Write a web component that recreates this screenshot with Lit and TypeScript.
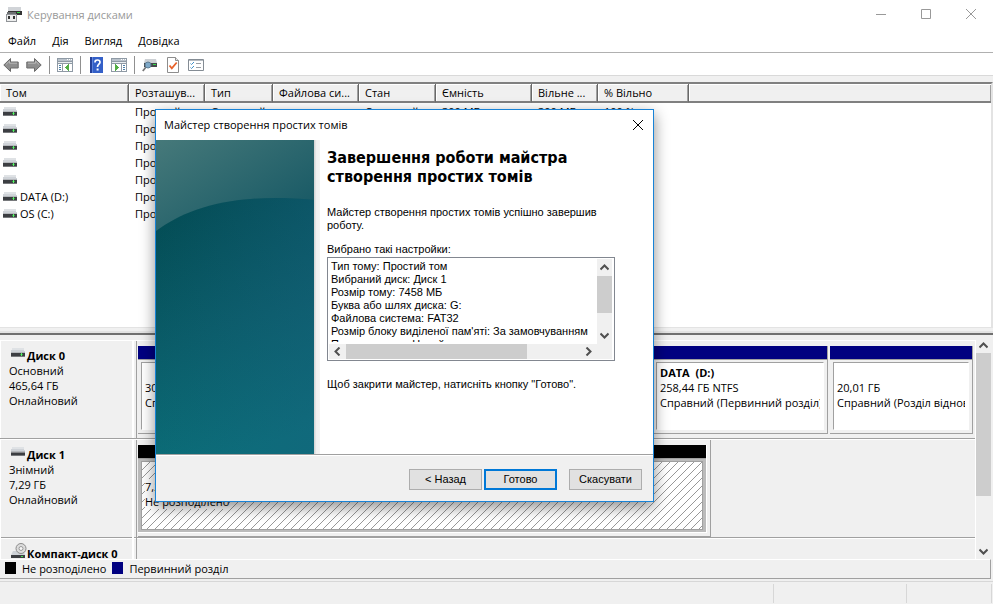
import { LitElement, html, css, svg } from "lit";
import { customElement } from "lit/decorators.js";

const driveIcon = (led = true) => html`<svg class="drive" width="14" height="9" viewBox="0 0 14 9" shape-rendering="crispEdges" aria-hidden="true">
  <path d="M1 0h12l1 5H0z" fill="#cfd3d8"/><path d="M1 0h12v2H1z" fill="#dfe2e5"/>
  <path d="M0 5h14v4H0z" fill="#3c3e42"/><path d="M0 4h14v1H0z" fill="#b4b7bb"/><path d="M0 8h14v1H0z" fill="#77797c"/>
  ${led ? svg`<path d="M9 6h3v1H9z" fill="#2fa53c"/><path d="M10 5h1v3h-1z" fill="#5df06a"/>` : svg`<path d="M0 5h14v1H0z" fill="#88898c"/>`}
</svg>`;

const cdIcon = html`<svg class="drive cd" width="16" height="16" viewBox="0 0 16 16" aria-hidden="true">
  <path d="M2 8h11l1 4H0z" fill="#cfd3d8"/><path d="M0 12h14v3H0z" fill="#3c3e42"/>
  <circle cx="10" cy="5.500" r="5" fill="#dcdcdc" stroke="#8c8c8c"/><circle cx="10" cy="5.500" r="2" fill="#f7f7f7" stroke="#9a9a9a"/>
  <path d="M10 13h2v1h-2z" fill="#41e04f"/>
</svg>`;

const chevron = (d: string) => html`<svg width="9" height="9" viewBox="0 0 9 9" aria-hidden="true"><path d=${d} fill="none" stroke="#505050" stroke-width="2"/></svg>`;
const UP = "M.5 6.500l4-4 4 4";
const DOWN = "M.5 2.500l4 4 4-4";
const LEFT = "M6.500 .5l-4 4 4 4";
const RIGHT = "M2.500 .5l4 4-4 4";

const arrowIcon = (right: boolean) => html`<svg width="16" height="16" viewBox="0 0 16 16" aria-hidden="true">
  <g transform=${right ? "matrix(-1 0 0 1 16 0)" : ""}>
  <path d="M.8 8L7.500 1.500V5h7.700v6H7.500v3.500z" fill="#8f8f8f" stroke="#6a6a6a"/><path d="M3 7.500l3.500-3.400V6.200h7.500" fill="none" stroke="#b9b9b9"/></g></svg>`;

const panelIcon = (right: boolean) => html`<svg width="16" height="16" viewBox="0 0 16 16" shape-rendering="crispEdges" aria-hidden="true">
  <path d="M0 1h16v14H0z" fill="#8f9aa5"/><path d="M1 2h14v2H1z" fill="#b9c2cb"/><path d="M10 2h1v1h-1zM12 2h1v1h-1zM14 2h1v1h-1z" fill="#fff"/>
  <path d="M1 5h14v1H1z" fill="#e9edf0"/>
  ${right
    ? svg`<path d="M1 7h9v7H1zM11 7h4v7h-4z" fill="#fff"/><path d="M4 7h1v1h1v1h1v1h1v1H7v1H6v1H5v1H4z" fill="#53ae45"/><path d="M12 8h2v1h-2zM12 10h2v1h-2zM12 12h2v1h-2z" fill="#4a7ea8"/>`
    : svg`<path d="M1 7h4v7H1zM6 7h9v7H6z" fill="#fff"/><path d="M11 7h1v7h-1v-1h-1v-1H9v-1H8v-1h1V9h1V8h1z" fill="#53ae45"/><path d="M2 8h2v1H2zM2 10h2v1H2zM2 12h2v1H2z" fill="#4a7ea8"/>`}
</svg>`;

const helpIcon = html`<svg width="13" height="16" viewBox="0 0 13 16" aria-hidden="true">
  <path d="M0 0h13v16H0z" fill="#3460c8"/><path d="M0 0h2v16H0z" fill="#233f98"/><path d="M2 0h1v16H2z" fill="#5d84dc"/>
  <path d="M5 5.500C5 3.500 6 3 7.300 3S10 3.700 10 5.200C10 7.200 7.500 7.300 7.500 10" fill="none" stroke="#fff" stroke-width="1.700"/><path d="M6.600 11.500h2v2h-2z" fill="#fff"/></svg>`;

const searchIcon = html`<svg width="16" height="14" viewBox="0 0 16 14" aria-hidden="true">
  <path d="M3 1h11l1 4H2z" fill="#ccd0d4"/><path d="M2 5h13v4H2z" fill="#45484c"/><path d="M11 6h3v1h-3z" fill="#36d748"/>
  <path d="M4 9L.8 13" stroke="#777" stroke-width="1.800"/><circle cx="6" cy="7" r="3" fill="#7fa9c8" stroke="#5d7c94"/></svg>`;

const docIcon = html`<svg width="12" height="16" viewBox="0 0 12 16" aria-hidden="true">
  <path d="M.5.5h8l3 3v12H.5z" fill="#fff" stroke="#8d8d8d"/><path d="M8.500.5v3h3" fill="#e6e6e6" stroke="#8d8d8d"/>
  <path d="M2.500 8.500l2.300 2.800L9.700 5.500" fill="none" stroke="#e8622a" stroke-width="1.800"/></svg>`;

const checklistIcon = html`<svg width="16" height="12" viewBox="0 0 16 12" aria-hidden="true">
  <path d="M.5.500h15v11H.5z" fill="#fff" stroke="#848c94"/><path d="M1 1h14v1H1z" fill="#b5bbc1"/>
  <path d="M2.500 4.500l1 1 2.500-2.500M2.500 8.500l1 1L6 7" fill="none" stroke="#3f8fc8"/><path d="M8 4.500h5M8 8.500h5" stroke="#9aa0a6"/></svg>`;

const appIcon = html`<svg width="16" height="15" viewBox="0 0 16 15" shape-rendering="crispEdges" aria-hidden="true">
  <path d="M2 0h13v4H2z" fill="#d1d4d8"/><path d="M2 4h14v4H2z" fill="#333"/><path d="M11 5h3v1h-3z" fill="#39d54a"/>
  <path d="M1 5h9v3H1z" fill="#6d7073"/><path d="M0 7h11v8H0z" fill="#909397"/><path d="M1 8h9v6H1z" fill="#eceded"/><path d="M2 9h2v3H2zM7 9h2v3H7z" fill="#333"/></svg>`;

interface Volume { name: string; layout: string; type: string; fs: string; state: string; size: string; free: string; percent: string; }
const volume = (name: string): Volume => ({ name, layout: "Простий", type: "Основний", fs: "", state: "Справний", size: "300 МБ", free: "300 МБ", percent: "100 %" });
const VOLUMES = ["", "", "", "", "", "DATA (D:)", "OS (C:)"].map(volume);
const COLUMNS = ["Том", "Розташув...", "Тип", "Файлова си...", "Стан", "Ємність", "Вільне ...", "% Вільно", ""];

const SETTINGS = [
  "Тип тому: Простий том",
  "Вибраний диск: Диск 1",
  "Розмір тому: 7458 МБ",
  "Буква або шлях диска: G:",
  "Файлова система: FAT32",
  "Розмір блоку виділеної пам'яті: За замовчуванням",
  "Позначка тому: Новий том",
].join("\n");

@customElement("completion-wizard")
export class CompletionWizard extends LitElement {
  static styles = css`
    :host { display: block; box-sizing: border-box; border: 1px solid #1883d7; background: #fff; font: 11px/13px "Liberation Sans", Arial, sans-serif; color: #000; box-shadow: 0 5px 14px rgba(0, 0, 0, 0.45); }
    * { box-sizing: border-box; }
    header { height: 30px; display: flex; align-items: center; justify-content: space-between; padding: 0 9px 0 8px; font: 11px/16px "Open Sans", "Noto Sans", sans-serif; }
    .close { border: 0; background: none; padding: 0; display: flex; }
    .body { display: flex; height: 314px; }
    .art { flex: none; width: 158px; height: 314px; display: block; }
    .edge { flex: none; width: 6px; background: linear-gradient(90deg, #d0d0d0, #f0f0f0 40%, #f4f4f4); }
    .content { flex: 1; min-width: 0; padding: 8px 38px 0 7px; }
    h1 { margin: 0 0 20px; font: bold 16px/19px "DejaVu Sans Condensed", "DejaVu Sans", sans-serif; font-stretch: normal; }
    p { margin: 0; }
    .lead { margin-bottom: 11px; }
    label { display: block; margin-bottom: 1px; }
    .box { display: grid; grid-template: 85px 15px / 1fr 15px; border: 1px solid #828790; padding: 1px 2px 1px 1px; margin-bottom: 17px; height: 104px; }
    textarea { width: 100%; height: 83px; resize: none; border: 0; outline: 0; padding: 1px 2px; font: inherit; color: inherit; overflow: hidden; white-space: pre; background: #fff; }
    .bar { display: flex; background: #f0f0f0; align-items: center; }
    .bar.v { flex-direction: column; }
    .bar span { flex: none; width: 17px; height: 17px; display: grid; place-items: center; }
    .bar.v span { width: 15px; }
    .bar.h span { height: 15px; }
    .bar i { background: #cdcdcd; }
    .bar.v i { width: 15px; height: 37px; margin-bottom: auto; }
    .bar.h i { height: 15px; width: 181px; margin-right: auto; }
    .corner { background: #f0f0f0; }
    footer { height: 47px; border-top: 1px solid #a0a0a0; box-shadow: inset 0 1px #fff; background: #f0f0f0; display: flex; justify-content: flex-end; align-items: center; gap: 2px; padding: 2px 11px 0 0; }
    footer button { width: 73px; height: 21px; padding: 0; border: 1px solid #adadad; background: #e1e1e1; font: inherit; color: inherit; }
    footer .primary { border: 2px solid #0078d7; }
    footer .cancel { margin-left: 10px; }
  `;
  render() {
    return html`
      <header><span>Майстер створення простих томів</span>
        <button class="close" aria-label="Закрити"><svg width="12" height="12" viewBox="0 0 12 12"><path d="M1 1l10 10M11 1L1 11" stroke="#000" fill="none"/></svg></button></header>
      <div class="body">
        <svg class="art" viewBox="0 0 158 314" aria-hidden="true">
          <defs>
            <linearGradient id="top" x1="0" y1="0" x2="1" y2="1"><stop offset="0" stop-color="#46797a"/><stop offset="1" stop-color="#0f5361"/></linearGradient>
            <linearGradient id="low" x1="0.300" y1="0" x2="0.500" y2="1"><stop offset="0" stop-color="#034c54"/><stop offset="0.500" stop-color="#0a5c68"/><stop offset="1" stop-color="#0b6e79"/></linearGradient>
            <linearGradient id="side"><stop offset="0" stop-color="#1a6080" stop-opacity="0"/><stop offset="1" stop-color="#1a6080" stop-opacity=".35"/></linearGradient>
          </defs>
          <path d="M0 0h158v100H0z" fill="url(#top)"/>
          <path d="M0 91C30 69 75 52 158 60V314H0z" fill="url(#low)"/>
          <path d="M0 91C30 69 75 52 158 60V314H0z" fill="url(#side)"/>
        </svg>
        <div class="edge"></div>
        <div class="content">
          <h1>Завершення роботи майстра створення простих томів</h1>
          <p class="lead">Майстер створення простих томів успішно завершив роботу.</p>
          <label for="settings">Вибрано такі настройки:</label>
          <div class="box">
            <textarea id="settings" readonly .value=${SETTINGS}></textarea>
            <div class="bar v"><span>${chevron(UP)}</span><i></i><span>${chevron(DOWN)}</span></div>
            <div class="bar h"><span>${chevron(LEFT)}</span><i></i><span>${chevron(RIGHT)}</span></div>
            <div class="corner"></div>
          </div>
          <p>Щоб закрити майстер, натисніть кнопку "Готово".</p>
        </div>
      </div>
      <footer><button>&lt; Назад</button><button class="primary">Готово</button><button class="cancel">Скасувати</button></footer>`;
  }
}

@customElement("app-root")
export class AppRoot extends LitElement {
  static styles = css`
    :host { display: flex; flex-direction: column; position: relative; height: 100vh; min-height: 560px; overflow: hidden; background: #f0f0f0; color: #000; font: 11px/15px "Open Sans", "Noto Sans", sans-serif; }
    * { box-sizing: border-box; }
    button { font: inherit; color: inherit; border: 0; background: none; padding: 0; }
    .title { flex: none; height: 30px; background: #fff; display: flex; align-items: center; gap: 5px; padding: 0 0 2px 6px; color: #999; }
    .controls { margin-left: auto; display: flex; }
    .controls button { width: 45px; height: 28px; display: grid; place-items: center; }
    .menu { flex: none; height: 23px; background: #fff; border-bottom: 1px solid #b0b0b0; display: flex; gap: 16px; align-items: center; padding: 0 0 2px 8px; }
    .tools { flex: none; height: 23px; background: #fff; border-bottom: 1px solid #d9d9d9; display: flex; align-items: center; gap: 7px; padding: 2px 0 0 3px; }
    .tools button { width: 16px; display: flex; justify-content: center; }
    .tools hr { width: 1px; height: 18px; margin: 0; border: 0; background: #909090; }
    .list { flex: 1; min-height: 0; overflow: hidden; margin-top: 6px; background: #fff; border-top: 2px solid #808080; border-right: 2px solid #e3e3e3; }
    table { width: 100%; table-layout: fixed; border-collapse: separate; border-spacing: 0; }
    .c0 { width: 129px; } .c1 { width: 76px; } .c2 { width: 68px; } .c3 { width: 86px; } .c4 { width: 77px; } .c5 { width: 96px; } .c6 { width: 66px; } .c7 { width: 91px; }
    th { height: 19px; padding: 0 0 0 6px; text-align: left; font-weight: 400; line-height: 15px; white-space: nowrap; overflow: hidden; background: #f0f0f0; border-right: 1px solid #696969; border-bottom: 2px solid #808080; box-shadow: inset 1px 1px #fff, inset -1px 0 #a0a0a0; }
    th:last-child { border-right: 0; }
    td { height: 17px; padding: 0 0 0 6px; line-height: 17px; white-space: nowrap; overflow: hidden; }
    td:first-child { padding-left: 3px; }
    .vol { display: flex; align-items: center; gap: 3px; height: 17px; }
    .drive { flex: none; }
    .split { flex: none; height: 13px; border-top: 1px solid #e3e3e3; display: flex; flex-direction: column; }
    .split div { height: 7px; border-bottom: 2px solid #707070; box-shadow: inset 0 -2px #e3e3e3; }
    .pane { flex: none; height: 219px; display: grid; grid-template-columns: 1fr 17px; overflow: hidden; }
    .disks { overflow: hidden; border-right: 1px solid #fff; }
    .disk { display: grid; grid-template-columns: 134px 1fr; column-gap: 2px; height: 99px; border-bottom: 1px solid #a0a0a0; border-top: 1px solid #fff; }
    .info { border-left: 1px solid #fff; border-right: 2px solid #fff; padding: 7px 0 0 8px; }
    .info h2 { margin: 0; font-size: 11px; line-height: 15px; display: flex; gap: 2px; padding-left: 2px; white-space: nowrap; }
    .info .cd { margin-top: -3px; margin-right: -2px; }
    .lane { border-left: 1px solid #a0a0a0; padding: 5px 2px 4px 1px; }
    .parts { display: grid; grid-template-columns: 164fr 347fr 175fr 143fr; gap: 2px; height: 88px; }
    .part { min-width: 0; display: flex; flex-direction: column; border-bottom: 1px solid #a0a0a0; border-right: 1px solid #a0a0a0; }
    .strip { flex: none; height: 14px; background: #000080; border-bottom: 1px solid #a0a0a0; }
    .cell { flex: 1; margin: 2px 3px 3px; background: #fff; border: 1px solid #fff; border-left-color: #a0a0a0; border-top-color: #a0a0a0; padding: 2px 3px 0; overflow: hidden; white-space: pre; }
    .cell div { height: 15px; overflow: hidden; }
    .picked { display: grid; grid-template-columns: 573fr 262fr; }
    .chosen { height: 97px; margin-top: -5px; padding: 5px 3px 0 0; border-right: 1px solid #a0a0a0; border-bottom: 1px solid #a0a0a0; }
    .free { height: 88px; background: #bbb; border-right: 1px solid #fff; border-bottom: 1px solid #fff; }
    .free .strip { background: #000; }
    .free .cell { height: 69px; margin: 2px 3px; border-color: #a0a0a0; background: linear-gradient(135deg, #fff 45%, #989898 45% 55%, #fff 55%) 0 0 / 8px 8px; }
    .free span { background: #fff; }
    .scroll { display: flex; flex-direction: column; align-items: center; width: 15px; background: #f0f0f0; }
    .scroll svg { margin: 1px 0 3px; flex: none; }
    .thumb { width: 15px; height: 143px; background: #cdcdcd; margin-bottom: auto; }
    .legend { flex: none; height: 20px; margin-right: 2px; border-top: 1px solid #fff; border-bottom: 1px solid #a0a0a0; border-right: 1px solid #a0a0a0; display: flex; align-items: center; gap: 6px; padding: 0 0 2px 5px; }
    .key { width: 11px; height: 12px; background: #000; }
    .key.blue { background: #000080; }
    .status { flex: none; height: 23px; margin-top: 2px; border-top: 1px solid #d7d7d7; display: grid; grid-template-columns: 1fr 133px 85px; padding: 2px 1px 1px 0; }
    .status div { border-right: 1px solid #d7d7d7; }
    completion-wizard { position: absolute; left: 155px; top: 109px; width: 499px; }
  `;
  render() {
    return html`
      <header class="title">${appIcon}<span>Керування дисками</span>
        <div class="controls">
          <button aria-label="Згорнути"><svg width="10" height="10"><path d="M0 5.500h10" stroke="#999"/></svg></button>
          <button aria-label="Розгорнути"><svg width="10" height="10"><path d="M.5.500h9v9h-9z" fill="none" stroke="#999"/></svg></button>
          <button aria-label="Закрити"><svg width="10" height="10"><path d="M0 0l10 10M10 0L0 10" stroke="#999"/></svg></button>
        </div></header>
      <nav class="menu">${["Файл", "Дія", "Вигляд", "Довідка"].map((m) => html`<button>${m}</button>`)}</nav>
      <div class="tools">
        <button aria-label="Назад">${arrowIcon(false)}</button><button aria-label="Вперед">${arrowIcon(true)}</button><hr>
        <button aria-label="Дерево консолі">${panelIcon(false)}</button><hr>
        <button aria-label="Довідка">${helpIcon}</button><button aria-label="Область дій">${panelIcon(true)}</button><hr>
        <button aria-label="Оновити">${searchIcon}</button><button aria-label="Властивості">${docIcon}</button><button aria-label="Параметри">${checklistIcon}</button>
      </div>
      <div class="list"><table>
        <colgroup>${COLUMNS.map((_, i) => html`<col class="c${i}">`)}</colgroup>
        <thead><tr>${COLUMNS.map((c) => html`<th>${c}</th>`)}</tr></thead>
        <tbody>${VOLUMES.map((v) => html`<tr><td><div class="vol">${driveIcon()}${v.name}</div></td><td>${v.layout}</td><td>${v.type}</td><td>${v.fs}</td><td>${v.state}</td><td>${v.size}</td><td>${v.free}</td><td>${v.percent}</td><td></td></tr>`)}</tbody>
      </table></div>
      <div class="split"><div></div></div>
      <main class="pane">
        <div class="disks">
          <section class="disk">
            <div class="info"><h2>${driveIcon()}Диск 0</h2><div>Основний</div><div>465,64 ГБ</div><div>Онлайновий</div></div>
            <div class="lane"><div class="parts">
              ${this.part("", "300 МБ", "Справний (Розділ віднов")}
              ${this.part("OS  (C:)", "186,60 ГБ NTFS", "Справний (Завантаження)")}
              ${this.part("DATA  (D:)", "258,44 ГБ NTFS", "Справний (Первинний розділ)")}
              ${this.part("", "20,01 ГБ", "Справний (Розділ відновлення)")}
            </div></div>
          </section>
          <section class="disk">
            <div class="info"><h2>${driveIcon(false)}Диск 1</h2><div>Знімний</div><div>7,29 ГБ</div><div>Онлайновий</div></div>
            <div class="lane picked"><div class="chosen"><div class="free"><div class="strip"></div>
              <div class="cell"><div></div><div><span>7,28 ГБ</span></div><div><span>Не розподілено</span></div></div></div></div></div>
          </section>
          <section class="disk"><div class="info"><h2>${cdIcon}Компакт-диск 0</h2></div><div class="lane"></div></section>
        </div>
        <div class="scroll">${chevron(UP)}<div class="thumb"></div>${chevron(DOWN)}</div>
      </main>
      <div class="legend"><div class="key"></div><span>Не розподілено</span><div class="key blue"></div><span>Первинний розділ</span></div>
      <footer class="status"><div></div><div></div><div></div></footer>
      <completion-wizard role="dialog" aria-label="Майстер створення простих томів"></completion-wizard>`;
  }
  private part(name: string, size: string, state: string) {
    return html`<div class="part"><div class="strip"></div><div class="cell"><div><b>${name}</b></div><div>${size}</div><div>${state}</div></div></div>`;
  }
}
